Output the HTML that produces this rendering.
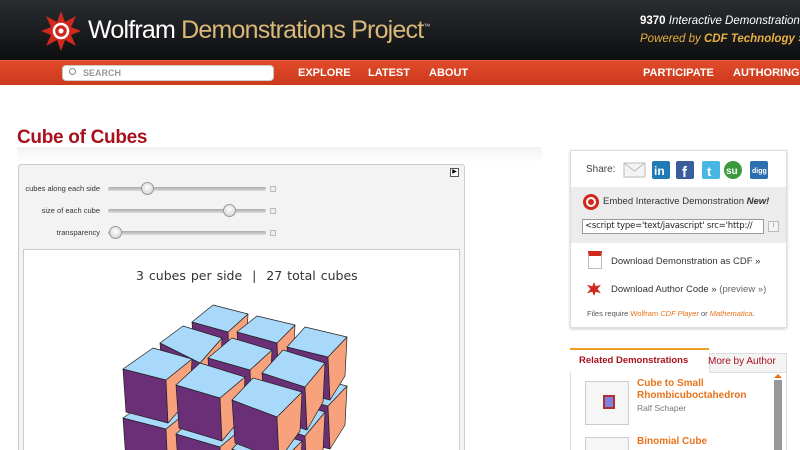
<!DOCTYPE html>
<html><head><meta charset="utf-8"><style>
*{margin:0;padding:0;box-sizing:border-box}
html,body{width:800px;height:450px;overflow:hidden}
body{background:#fff;font-family:"Liberation Sans",sans-serif;position:relative}
.a{position:absolute}
#hdr{left:0;top:0;width:800px;height:60px;background:linear-gradient(#2a2d30,#151719 70%,#0e0f10)}
#nav{left:0;top:60px;width:800px;height:25px;background:linear-gradient(#e04a2a,#cc3a1c);border-top:1px solid #f06040}
.nv{color:#fff;font-size:11px;font-weight:bold;top:67px}
#search{left:62px;top:65px;width:212px;height:16px;background:#fff;border-radius:4px;border:1px solid #ccc;font-size:9px;color:#999;padding:2px 0 0 20px;font-weight:bold}
.box{border:1px solid #ddd;box-shadow:0 1px 3px rgba(0,0,0,.2);background:#fff}
.sl{font-size:7.5px;color:#333;text-align:right;width:80px;left:20px}
.tr{height:4px;background:linear-gradient(#aaa,#ddd);border-radius:2px;left:108px;width:158px}
.kn{width:13px;height:13px;border-radius:50%;background:radial-gradient(circle at 50% 40%,#fff,#ccc);border:1px solid #999}
.pl{width:6px;height:6px;border:1px solid #bbb;background:#eee;left:270px}
.or{color:#e8731c;font-weight:bold;font-size:10px}
</style></head><body>
<div id="hdr" class="a"></div>
<svg class="a" style="left:40px;top:10px" width="42" height="42" viewBox="0 0 42 42"><polygon points="21,1 25,12 36,6 31,17 41,21 31,25 36,36 25,30 21,41 17,30 6,36 11,25 1,21 11,17 6,6 17,12" fill="#d0281c"/><circle cx="21" cy="21" r="7" fill="none" stroke="#fff" stroke-width="2.5"/><circle cx="21" cy="21" r="2.5" fill="#fff"/></svg>
<div class="a" style="left:88px;top:16px;font-size:25px;color:#fff;letter-spacing:-.8px;white-space:nowrap">Wolfram <span style="color:#d9b878">Demonstrations Project</span><sup style="font-size:7px;color:#ccc">™</sup></div>
<div class="a" style="left:640px;top:15px;font-size:11.5px;color:#fff;font-style:italic;white-space:nowrap;width:160px;overflow:hidden"><b style="font-style:normal">9370</b> Interactive Demonstrations</div>
<div class="a" style="left:640px;top:33px;font-size:11.5px;color:#e8b040;font-style:italic;white-space:nowrap;width:160px;overflow:hidden">Powered by <b>CDF Technology »</b></div>
<div id="nav" class="a"></div>
<div id="search" class="a">SEARCH</div>
<div class="a" style="left:69px;top:68px;width:7px;height:7px;border:1.5px solid #888;border-radius:50%"></div>
<div class="a nv" style="left:298px">EXPLORE</div>
<div class="a nv" style="left:368px">LATEST</div>
<div class="a nv" style="left:429px">ABOUT</div>
<div class="a nv" style="left:643px">PARTICIPATE</div>
<div class="a nv" style="left:733px">AUTHORING</div>
<div class="a" style="left:17px;top:127px;font-size:19px;font-weight:bold;color:#a8101e;letter-spacing:-.3px">Cube of Cubes</div>
<div class="a" style="left:17px;top:147px;width:525px;height:16px;background:linear-gradient(#f2f2f2,#fff)"></div>
<div class="a" style="left:18px;top:164px;width:447px;height:286px;background:#f3f3f3;border:1px solid #ccc;border-bottom:0;border-radius:3px 3px 0 0"></div>
<div class="a" style="left:450px;top:168px;width:9px;height:9px;border:1px solid #555;background:#fff;font-size:6px;line-height:7px;text-align:center">▶</div>
<div class="a sl" style="top:184px">cubes along each side</div><div class="a tr" style="top:187px"></div><div class="a kn" style="left:141px;top:182px"></div><div class="a pl" style="top:186px"></div>
<div class="a sl" style="top:206px">size of each cube</div><div class="a tr" style="top:209px"></div><div class="a kn" style="left:223px;top:204px"></div><div class="a pl" style="top:208px"></div>
<div class="a sl" style="top:228px">transparency</div><div class="a tr" style="top:231px"></div><div class="a kn" style="left:109px;top:226px"></div><div class="a pl" style="top:230px"></div>
<div class="a" style="left:23px;top:249px;width:437px;height:201px;background:#fff;border:1px solid #ccc;border-bottom:0"></div>
<div class="a" style="left:136px;top:268px;font-size:12.5px;color:#333;font-family:'DejaVu Sans',sans-serif;word-spacing:1px">3 cubes per side &nbsp;| &nbsp;27 total cubes</div>
<svg class="a" style="left:0;top:0" width="480" height="450" stroke="#222" stroke-width=".7" stroke-linejoin="round">
<g id="cubes"></g>
</svg>
<script>
var c=[[192,322,213,305,248,314,228,332],[237,332,257,316,295,325,277,343],[287,347,305,327,347,337,328,357],[160,343,183,326,222,338,200,363],[208,358,232,338,272,350,250,370],[262,373,283,350,325,363,305,387],[123,369,153,348,192,359,166,380],[176,385,200,363,245,377,220,398],[232,400,253,378,302,392,277,417]];
var s='',h=43;
function cube(p,dy){var A=[p[0],p[1]+dy],B=[p[2],p[3]+dy],C=[p[4],p[5]+dy],D=[p[6],p[7]+dy];
function P(a){return a.map(function(q){return q[0]+','+q[1]}).join(' ')}
return '<polygon fill="#6b2f78" points="'+P([A,D,[D[0]+2,D[1]+h],[A[0]+3,A[1]+h]])+'"/>'+
'<polygon fill="#f7a27c" points="'+P([D,C,[C[0]-2,C[1]+h-4],[D[0]+2,D[1]+h]])+'"/>'+
'<polygon fill="#a8d8fa" points="'+P([A,B,C,D])+'"/>';}
for(var L=1;L>=0;L--){for(var i=0;i<c.length;i++)s+=cube(c[i],L*49);}
document.getElementById('cubes').innerHTML=s;
</script>
<div class="a box" style="left:570px;top:150px;width:217px;height:178px"></div>
<div class="a" style="left:571px;top:187px;width:215px;height:56px;background:#ececec"></div>
<div class="a" style="left:586px;top:164px;font-size:10px;color:#444">Share:</div>
<svg class="a" style="left:623px;top:160px" width="150" height="20">
<rect x="1" y="3" width="21" height="14" fill="#f4f4f4" stroke="#bbb"/><path d="M1 3 L11.5 11 L22 3" fill="none" stroke="#bbb"/>
<rect x="29" y="1" width="18" height="18" rx="2" fill="#1f7ab5"/><text x="31" y="15" font-size="12" font-weight="bold" fill="#fff" font-family="Liberation Sans">in</text>
<rect x="53" y="1" width="18" height="18" rx="2" fill="#3b5c9d"/><text x="59" y="17" font-size="15" font-weight="bold" fill="#fff" font-family="Liberation Sans">f</text>
<rect x="79" y="1" width="18" height="18" rx="2" fill="#4ab6e4"/><text x="84" y="16" font-size="13" font-weight="bold" fill="#fff" font-family="Liberation Sans">t</text>
<circle cx="110" cy="10" r="9" fill="#3a9a3c"/><text x="103" y="14" font-size="10" font-weight="bold" fill="#fff" font-family="Liberation Sans">su</text>
<rect x="127" y="1" width="18" height="18" rx="2" fill="#2b6fb0"/><text x="129" y="13" font-size="7" font-weight="bold" fill="#fff" font-family="Liberation Sans">digg</text>
</svg>
<svg class="a" style="left:582px;top:193px" width="18" height="18"><circle cx="9" cy="9" r="8" fill="#d0281c"/><circle cx="9" cy="9" r="4" fill="none" stroke="#fff" stroke-width="2"/></svg>
<div class="a" style="left:603px;top:196px;font-size:9.5px;color:#333;white-space:nowrap">Embed Interactive Demonstration <b><i>New!</i></b></div>
<div class="a" style="left:582px;top:219px;width:182px;height:15px;background:#fff;border:1px solid #999;font-size:8.5px;padding:1px 2px;font-family:'DejaVu Sans',sans-serif;white-space:nowrap;overflow:hidden;color:#222;letter-spacing:-.2px">&lt;script type='text/javascript' src='http://</div>
<div class="a" style="left:768px;top:221px;width:11px;height:11px;border:1px solid #bbb;font-size:7px;color:#888;text-align:center;background:#f4f4f4">i</div>
<div class="a" style="left:588px;top:251px;width:14px;height:18px;background:#fff;border:1px solid #bbb;border-top:5px solid #d0281c"></div>
<div class="a" style="left:611px;top:256px;font-size:9.5px;color:#333">Download Demonstration as CDF »</div>
<div class="a" style="left:587px;top:282px;width:14px;height:14px;background:#d0281c;clip-path:polygon(50% 0,62% 30%,100% 20%,75% 50%,100% 80%,62% 70%,50% 100%,38% 70%,0 80%,25% 50%,0 20%,38% 30%)"></div>
<div class="a" style="left:611px;top:284px;font-size:9.5px;color:#333">Download Author Code » <span style="color:#666">(preview »)</span></div>
<div class="a" style="left:587px;top:309px;font-size:7.5px;color:#555">Files require <span style="color:#e8731c">Wolfram <i>CDF Player</i></span> or <i style="color:#e8731c">Mathematica</i>.</div>
<div class="a" style="left:570px;top:348px;width:139px;height:102px;border-top:2px solid #f0a020;background:#fff"></div>
<div class="a" style="left:709px;top:353px;width:78px;height:20px;background:#f4f4f4;border:1px solid #ddd"></div>
<div class="a" style="left:579px;top:355px;font-size:9.5px;font-weight:bold;color:#a8101e">Related Demonstrations</div>
<div class="a" style="left:708px;top:356px;font-size:10px;color:#a8101e">More by Author</div>
<div class="a" style="left:570px;top:372px;width:217px;height:78px;border-left:1px solid #ddd;border-right:1px solid #ddd"></div>
<div class="a" style="left:774px;top:380px;width:8px;height:70px;background:#999"></div>
<div class="a" style="left:774px;top:374px;width:0;height:0;border:4px solid transparent;border-bottom:4px solid #e8731c;border-top:0"></div>
<div class="a" style="left:585px;top:381px;width:44px;height:44px;border:1px solid #ccc;background:#f6f6f6"></div>
<div class="a" style="left:603px;top:395px;width:12px;height:14px;background:#8080e0;border:2px solid #b03030"></div>
<div class="a or" style="left:637px;top:378px;line-height:12px">Cube to Small<br>Rhombicuboctahedron</div>
<div class="a" style="left:637px;top:403px;font-size:8.5px;color:#777">Ralf Schaper</div>
<div class="a" style="left:585px;top:437px;width:44px;height:13px;border:1px solid #ccc;border-bottom:0;background:#f6f6f6"></div>
<div class="a or" style="left:637px;top:436px">Binomial Cube</div>
</body></html>
